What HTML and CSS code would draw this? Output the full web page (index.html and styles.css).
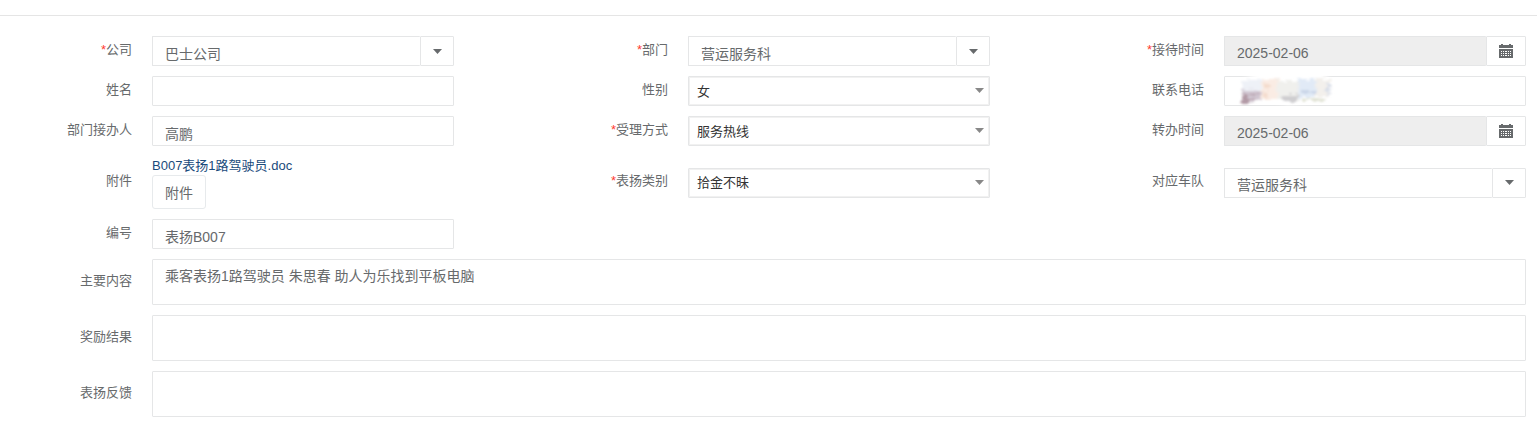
FILE: index.html
```html
<!DOCTYPE html>
<html lang="zh-CN">
<head>
<meta charset="utf-8">
<meta name="viewport" content="width=device-width, initial-scale=1">
<title>表扬登记</title>
<link rel="stylesheet" href="styles.css">
</head>
<body>
<svg class="symbols" aria-hidden="true">
  <symbol id="caret" viewBox="0 0 9 5"><path d="M0 0h9L4.500 5z"/></symbol>
  <symbol id="calendar" viewBox="0 0 14 14">
    <path d="M0 1h2V0h2v1h6V0h2v1h2v3H0z"/>
    <path fill-rule="evenodd" d="M0 5h14v9H0zM2 7v1h1V7zM4 7v1h1V7zM6 7v1h2V7zM9 7v1h1V7zM11 7v1h1V7zM2 9v1h1V9zM4 9v1h1V9zM6 9v1h2V9zM9 9v1h1V9zM11 9v1h1V9zM2 11v1h1v-1zM4 11v1h1v-1zM6 11v1h2v-1zM9 11v1h1v-1zM11 11v1h1v-1z"/>
  </symbol>
</svg>
<header class="topbar"></header>
<form class="form">
  <div class="field">
    <label class="label" for="company"><span class="required">*</span>公司</label>
    <div class="group">
      <input class="input" id="company" type="text" value="巴士公司">
      <button class="addon" type="button" aria-label="选择公司"><svg class="caret"><use href="#caret"/></svg></button>
    </div>
  </div>
  <div class="field">
    <label class="label" for="dept"><span class="required">*</span>部门</label>
    <div class="group">
      <input class="input" id="dept" type="text" value="营运服务科">
      <button class="addon" type="button" aria-label="选择部门"><svg class="caret"><use href="#caret"/></svg></button>
    </div>
  </div>
  <div class="field">
    <label class="label" for="received"><span class="required">*</span>接待时间</label>
    <div class="group">
      <input class="input readonly" id="received" type="text" value="2025-02-06" readonly>
      <button class="addon wide" type="button" aria-label="选择接待时间"><svg class="calendar"><use href="#calendar"/></svg></button>
    </div>
  </div>

  <div class="field">
    <label class="label" for="name">姓名</label>
    <input class="input" id="name" type="text">
  </div>
  <div class="field">
    <label class="label" for="gender">性别</label>
    <div class="picker">
      <select class="select" id="gender"><option>女</option><option>男</option></select>
      <svg class="caret picker-caret"><use href="#caret"/></svg>
    </div>
  </div>
  <div class="field">
    <label class="label" for="phone">联系电话</label>
    <div class="masked">
      <input class="input" id="phone" type="text">
      <svg class="smudge" viewBox="0 0 110 40" aria-hidden="true">
        <defs>
          <filter id="rough" x="-10%" y="-20%" width="120%" height="140%">
            <feTurbulence type="fractalNoise" baseFrequency="0.12 0.4" numOctaves="3" seed="7" result="n"/>
            <feDisplacementMap in="SourceGraphic" in2="n" scale="8" xChannelSelector="R" yChannelSelector="G" result="d"/>
            <feGaussianBlur in="d" stdDeviation="0.9"/>
          </filter>
          <filter id="soft"><feGaussianBlur stdDeviation="1"/></filter>
        </defs>
        <path fill="#fff" filter="url(#soft)" d="M4 11l14-4 16-4h54l14 6v18l-16 6-28 2-14-2-30-2-10-1z"/>
        <g filter="url(#rough)">
          <path fill="#eef1f7" d="M11 10h21v14H12z"/>
          <path fill="#d0c5d0" d="M12 20l20 1v9l-19 3z"/>
          <path fill="#b29aa6" d="M12 24h6v9h-6zM20 23h9v2h-9zM18 28h7v2h-7z"/>
          <path fill="#faece4" d="M32 9h18v20H31z"/>
          <path fill="#f4dccd" d="M34 12h5v7h-5zM33 23h5v4h-5z"/>
          <path fill="#f0f0ed" d="M48 11h23v18H47z"/>
          <path fill="#cfced0" d="M50 25h18v6H53z"/>
          <path fill="#e1eaf6" d="M69 9h19v18H68z"/>
          <path fill="#cad6e8" d="M71 21h14v3H71z"/>
          <path fill="#f3f0ec" d="M86 9h15l-2 18H85z"/>
          <path fill="#e1e3d5" d="M72 28h22v3H72z"/>
          <path fill="#d9dee8" d="M97 13h4l-2 13h-2z"/>
        </g>
      </svg>
    </div>
  </div>

  <div class="field">
    <label class="label" for="handler">部门接办人</label>
    <input class="input" id="handler" type="text" value="高鹏">
  </div>
  <div class="field">
    <label class="label" for="channel"><span class="required">*</span>受理方式</label>
    <div class="picker">
      <select class="select" id="channel"><option>服务热线</option></select>
      <svg class="caret picker-caret"><use href="#caret"/></svg>
    </div>
  </div>
  <div class="field">
    <label class="label" for="transferred">转办时间</label>
    <div class="group">
      <input class="input readonly" id="transferred" type="text" value="2025-02-06" readonly>
      <button class="addon wide" type="button" aria-label="选择转办时间"><svg class="calendar"><use href="#calendar"/></svg></button>
    </div>
  </div>

  <div class="field">
    <label class="label" for="attach">附件</label>
    <div class="attachment">
      <a class="file" href="#">B007表扬1路驾驶员.doc</a>
      <button class="upload" id="attach" type="button">附件</button>
    </div>
  </div>
  <div class="field">
    <label class="label" for="category"><span class="required">*</span>表扬类别</label>
    <div class="picker">
      <select class="select" id="category"><option>拾金不昧</option></select>
      <svg class="caret picker-caret"><use href="#caret"/></svg>
    </div>
  </div>
  <div class="field">
    <label class="label" for="fleet">对应车队</label>
    <div class="group">
      <input class="input" id="fleet" type="text" value="营运服务科">
      <button class="addon" type="button" aria-label="选择对应车队"><svg class="caret"><use href="#caret"/></svg></button>
    </div>
  </div>

  <div class="field">
    <label class="label" for="number">编号</label>
    <input class="input" id="number" type="text" value="表扬B007">
  </div>

  <div class="field full">
    <label class="label" for="content">主要内容</label>
    <textarea class="textarea" id="content" rows="2">乘客表扬1路驾驶员 朱思春 助人为乐找到平板电脑</textarea>
  </div>
  <div class="field full">
    <label class="label" for="reward">奖励结果</label>
    <textarea class="textarea" id="reward" rows="2"></textarea>
  </div>
  <div class="field full">
    <label class="label" for="feedback">表扬反馈</label>
    <textarea class="textarea" id="feedback" rows="2"></textarea>
  </div>
</form>
</body>
</html>
```
FILE: styles.css
```css
* {
  box-sizing: border-box;
}

body {
  margin: 0;
  background: #fff;
  color: #676a6c;
  font-family: "Liberation Sans", "Noto Sans CJK SC", sans-serif;
  font-size: 13px;
}

input,
select,
textarea,
button {
  margin: 0;
  color: inherit;
  font-family: inherit;
  font-size: 14px;
}

.symbols {
  display: none;
}

.topbar {
  height: 16px;
  border-bottom: 1px solid #e5e5e5;
}

.form {
  display: grid;
  grid-template-columns: repeat(3, minmax(0, 1fr));
  gap: 10px 82px;
  align-items: center;
  padding: 20px 11px 8px 0;
}

.field {
  display: grid;
  grid-template-columns: 132px minmax(0, 1fr);
  column-gap: 20px;
  align-items: center;
}

.full {
  grid-column: 1 / -1;
}

.label {
  padding-bottom: 3px;
  line-height: 20px;
  text-align: right;
}

.required {
  color: #ff3b30;
}

.input,
.select,
.textarea {
  display: block;
  width: 100%;
  border: 1px solid #e5e6e7;
  border-radius: 1px;
  background: #fff;
  outline: 0;
}

.input {
  height: 30px;
  min-width: 0;
  padding: 3px 12px 0;
}

.readonly {
  background: #eee;
}

.textarea {
  padding: 8px 12px 4px;
  line-height: 16px;
  resize: none;
}

.group {
  display: flex;
}

.group .input {
  flex: 1;
  border-right: 0;
}

.addon {
  display: flex;
  flex: none;
  align-items: center;
  justify-content: center;
  width: 34px;
  height: 30px;
  padding: 0;
  border: 1px solid #e5e6e7;
  border-radius: 1px;
  background: #fff;
}

.wide {
  width: 40px;
}

.caret {
  width: 9px;
  height: 5px;
  fill: #676a6c;
}

.calendar {
  width: 14px;
  height: 14px;
  fill: #676a6c;
}

.picker,
.masked {
  position: relative;
}

.select {
  height: 30px;
  padding: 0 24px 0 8px;
  box-shadow: inset 0 0 0 1px #f1f1f1;
  color: #333;
  font-size: 13px;
  appearance: none;
}

.picker-caret {
  position: absolute;
  top: 12px;
  right: 6px;
  fill: #888;
  pointer-events: none;
}

.smudge {
  position: absolute;
  top: -6px;
  left: 6px;
  width: 110px;
  height: 40px;
  pointer-events: none;
}

.attachment {
  display: flex;
  flex-direction: column;
  align-items: flex-start;
}

.file {
  color: #1a4b7c;
  line-height: 19px;
  text-decoration: none;
}

.upload {
  height: 34px;
  padding: 0 12px;
  border: 1px solid #e7eaec;
  border-radius: 3px;
  background: #fff;
}
```
